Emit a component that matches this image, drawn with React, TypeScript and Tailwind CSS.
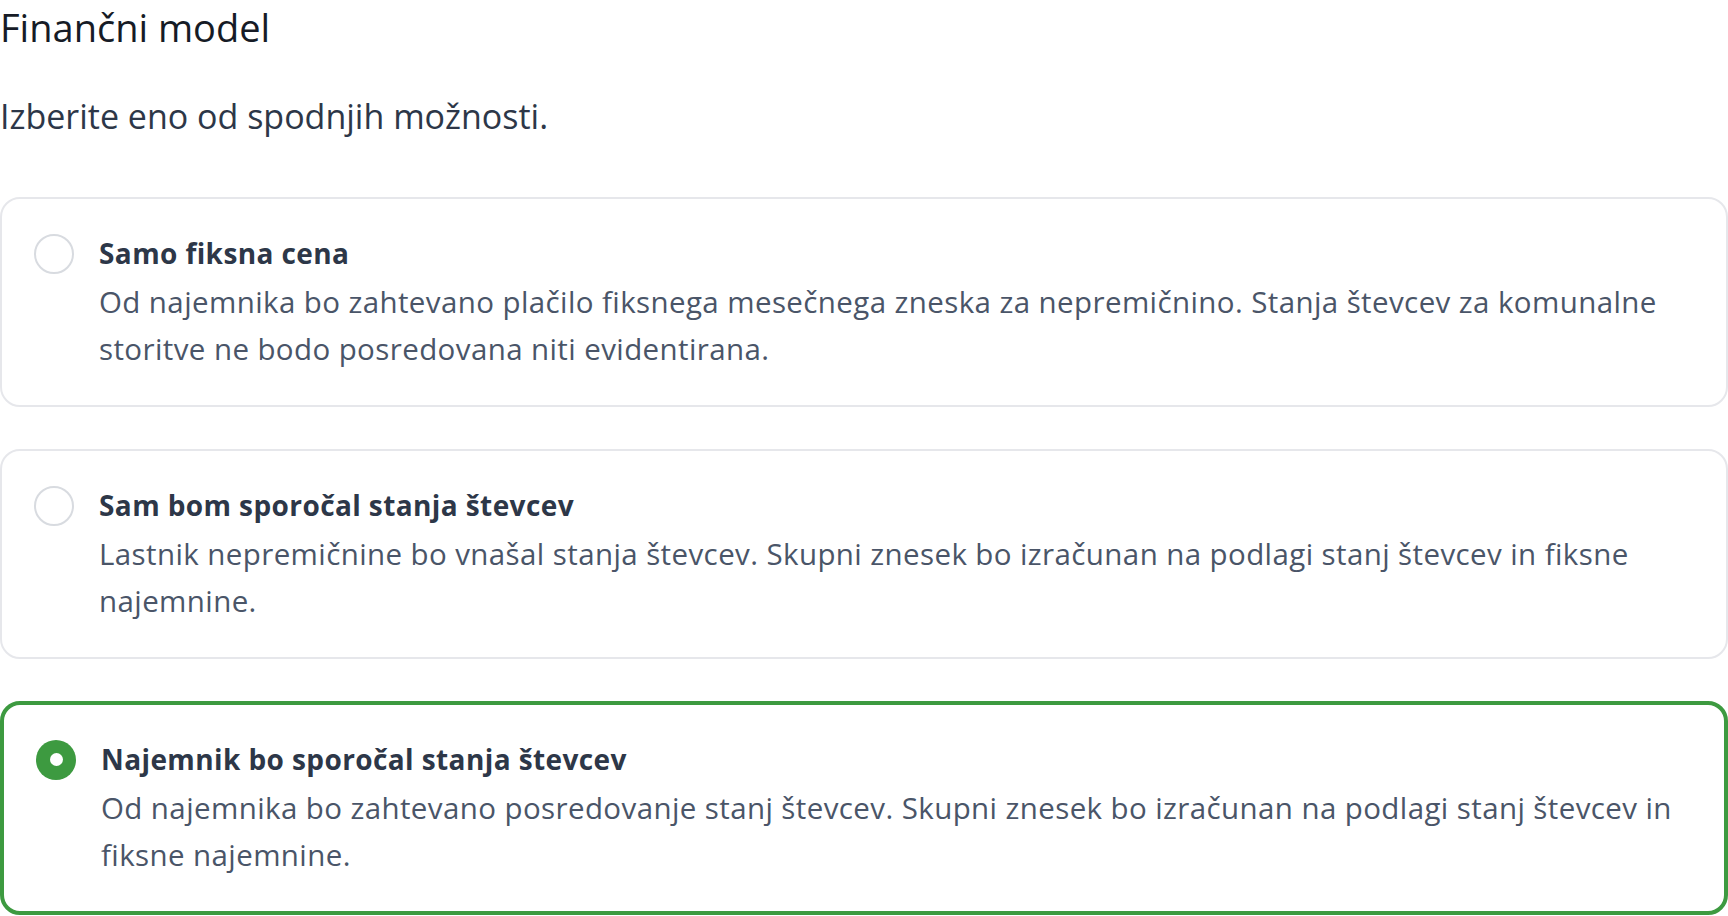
import React from "react";

type Option = { title: string; desc: string; selected?: boolean };

const options: Option[] = [
  {
    title: "Samo fiksna cena",
    desc: "Od najemnika bo zahtevano plačilo fiksnega mesečnega zneska za nepremičnino. Stanja števcev za komunalne storitve ne bodo posredovana niti evidentirana.",
  },
  {
    title: "Sam bom sporočal stanja števcev",
    desc: "Lastnik nepremičnine bo vnašal stanja števcev. Skupni znesek bo izračunan na podlagi stanj števcev in fiksne najemnine.",
  },
  {
    title: "Najemnik bo sporočal stanja števcev",
    desc: "Od najemnika bo zahtevano posredovanje stanj števcev. Skupni znesek bo izračunan na podlagi stanj števcev in fiksne najemnine.",
    selected: true,
  },
];

function Card({ o }: { o: Option }) {
  return (
    <div
      className={
        o.selected
          ? "flex rounded-[20px] border-[4px] border-[#3d9a40] bg-white pl-[32px] pr-[20px] pt-[30px] pb-[33px]"
          : "flex rounded-[20px] border-[2px] border-[#e6e7eb] bg-white pl-[32px] pr-[20px] pt-[30px] pb-[33px]"
      }
    >
      <div className="flex h-[49px] shrink-0 items-center">
        {o.selected ? (
          <div className="flex h-[40px] w-[40px] items-center justify-center rounded-full bg-[#3d9a40]">
            <div className="h-[13px] w-[13px] rounded-full bg-white" />
          </div>
        ) : (
          <div className="h-[40px] w-[40px] rounded-full border-[2px] border-[#d8dbe0] bg-white" />
        )}
      </div>
      <div className="ml-[25px] min-w-0 flex-1">
        <div className="text-[28px] leading-[49px] font-bold tracking-[0.4px] text-[#2d3748]">{o.title}</div>
        <div className="text-[29.5px] leading-[47px] tracking-[0.4px] text-[#4a5568]">{o.desc}</div>
      </div>
    </div>
  );
}

export default function App() {
  return (
    <div
      className="min-h-[916px] bg-white"
      style={{ fontFamily: '"Open Sans", "Liberation Sans", sans-serif' }}
    >
      <h1 className="text-[38px] leading-[54px] font-normal text-[#161b26]">Finančni model</h1>
      <p className="mt-[37px] text-[34px] leading-[50px] text-[#2d3748]">Izberite eno od spodnjih možnosti.</p>
      <div className="mt-[56px] flex flex-col gap-[42px]">
        {options.map((o) => (
          <Card key={o.title} o={o} />
        ))}
      </div>
    </div>
  );
}
